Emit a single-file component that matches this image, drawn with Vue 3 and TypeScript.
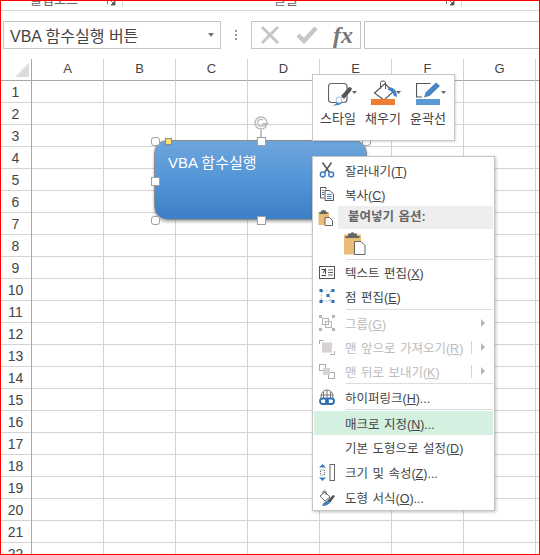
<script setup lang="ts">
const cols = ["A", "B", "C", "D", "E", "F", "G"];
const rows = Array.from({ length: 22 }, (_, i) => i + 1);
const cells = Array.from({ length: 22 * 8 }, (_, i) => i);

const handles = ["tl", "tm", "tr", "ml", "bl", "bm", "br"];

type Item = {
  label: string;
  key?: string;
  tail?: string;
  icon?: string;
  off?: boolean;
  arrow?: boolean;
  pipe?: boolean;
  sepAfter?: boolean;
  hot?: boolean;
  tall?: boolean;
};

const topItems: Item[] = [
  { label: "잘라내기", key: "T", icon: "cut" },
  { label: "복사", key: "C", icon: "copy" },
];
const lowItems: Item[] = [
  { label: "텍스트 편집", key: "X", icon: "text" },
  { label: "점 편집", key: "E", icon: "points", sepAfter: true },
  { label: "그룹", key: "G", icon: "group", off: true, arrow: true },
  { label: "맨 앞으로 가져오기", key: "R", icon: "front", off: true, arrow: true, pipe: true },
  { label: "맨 뒤로 보내기", key: "K", icon: "back", off: true, arrow: true, pipe: true, sepAfter: true },
  { label: "하이퍼링크", key: "H", tail: "...", icon: "link", sepAfter: true },
  { label: "매크로 지정", key: "N", tail: "...", hot: true },
  { label: "기본 도형으로 설정", key: "D", tall: true },
  { label: "크기 및 속성", key: "Z", tail: "...", icon: "size", tall: true },
  { label: "도형 서식", key: "O", tail: "...", icon: "format", tall: true },
];
</script>

<template>
  <div class="page">
    <div class="ribbon">
      <div class="group g1">
        <span class="group-name">클립보드</span>
        <svg class="launcher" width="9" height="9" viewBox="0 0 9 9"><path d="M0.5 0.5H7M0.5 0.5V7" fill="none" stroke="#777" /><path d="M3 3L7 7M8 4V8H4z" fill="#555" stroke="#555" stroke-width="0.8" /></svg>
      </div>
      <div class="group g2">
        <span class="group-name">글꼴</span>
        <svg class="launcher" width="9" height="9" viewBox="0 0 9 9"><path d="M0.5 0.5H7M0.5 0.5V7" fill="none" stroke="#777" /><path d="M3 3L7 7M8 4V8H4z" fill="#555" stroke="#555" stroke-width="0.8" /></svg>
      </div>
    </div>

    <div class="formula">
      <div class="namebox">
        <span>VBA 함수실행 버튼</span>
        <i class="caret"></i>
      </div>
      <div class="dots"><b></b><b></b><b></b></div>
      <div class="fx-buttons">
        <svg width="22" height="20" viewBox="0 0 22 20"><path d="M3 2L19 18M19 2L3 18" stroke="#c6c6c6" stroke-width="3" fill="none" /></svg>
        <svg width="22" height="20" viewBox="0 0 22 20"><path d="M2 10L8 16L20 3" stroke="#c6c6c6" stroke-width="4.500" fill="none" /></svg>
        <span class="fx">fx</span>
      </div>
      <div class="input"></div>
    </div>

    <div class="sheet">
      <div class="corner"><i></i></div>
      <div v-for="c in cols" :key="c" class="col-head">{{ c }}</div>
      <div class="col-rest"></div>
      <div class="row-heads">
        <div v-for="r in rows" :key="r" class="row-head">{{ r }}</div>
      </div>
      <div class="cells">
        <div v-for="c in cells" :key="c" class="cell"></div>
      </div>
    </div>

    <!-- selected shape -->
    <div class="shape">
      <span>VBA 함수실행</span>
    </div>
    <svg class="rotate" width="20" height="26" viewBox="0 0 20 26">
      <path d="M10 17V26" stroke="#8a8a8a" fill="none" />
      <circle cx="10" cy="10" r="6" fill="none" stroke="#bbb" stroke-width="1.400" />
      <path d="M13.500 10a3.500 3.500 0 1 1 -1.500 -3" fill="none" stroke="#bbb" stroke-width="1.400" />
      <path d="M11 10L18 10L14.500 14z" fill="#bbb" />
    </svg>
    <i v-for="h in handles" :key="h" class="handle" :class="h"></i>
    <i class="adjust"></i>

    <!-- mini toolbar -->
    <div class="mini">
      <div class="mini-btn">
        <svg class="mini-icon style-icon" width="30" height="26" viewBox="0 0 30 26">
          <rect x="0.500" y="3.500" width="18.500" height="19" rx="3" fill="none" stroke="#666" stroke-width="1.200" />
          <path d="M4 25.500Q8 25 10.500 20L15 22Q12 26 4 25.500z" fill="#3f7fc0" />
          <circle cx="11" cy="20" r="3" fill="#fff" stroke="#9cc0e2" />
          <path d="M13 16L21 7L24 8L23 11L16 19z" fill="#555" />
          <path d="M24 11h5l-2.500 3z" fill="#666" />
        </svg>
        <span>스타일</span>
      </div>
      <div class="mini-btn">
        <svg class="mini-icon" width="30" height="26" viewBox="0 0 30 26">
          <path d="M3.500 13L14 3.500L22 12L13 20z" fill="#fff" stroke="#555" stroke-width="1.100" />
          <path d="M9.500 9V2.500Q9.500 1 12 1Q14.500 1 14.500 2.500V9" fill="none" stroke="#555" />
          <path d="M18 7Q26 8 26 17L23 16Q22 11 17 10z" fill="#3f7fc0" />
          <rect x="0" y="19" width="24" height="6" fill="#ed7d31" />
          <path d="M25 11h5l-2.500 3z" fill="#666" />
        </svg>
        <span>채우기</span>
      </div>
      <div class="mini-btn">
        <svg class="mini-icon" width="30" height="26" viewBox="0 0 30 26">
          <path d="M14.500 3.500H0.500V17H6" fill="none" stroke="#555" stroke-width="1.200" />
          <path d="M8 17.500L9.500 12.500L20 2.500L24 6L13.500 16z" fill="#4a86c5" />
          <rect x="0" y="19" width="24" height="6" fill="#5b9bd5" />
          <path d="M25 11h5l-2.500 3z" fill="#666" />
        </svg>
        <span>윤곽선</span>
      </div>
    </div>

    <!-- context menu -->
    <div class="menu">
      <div v-for="it in topItems" :key="it.label" class="item">
        <div class="ico">
          <svg v-if="it.icon === 'cut'" width="16" height="16" viewBox="0 0 16 16">
            <path d="M3.500 0.500L10.500 10.500M12.500 0.500L5.500 10.500" stroke="#555" stroke-width="1.500" fill="none" />
            <circle cx="3.800" cy="12.500" r="2.400" fill="none" stroke="#3f7fc0" stroke-width="1.500" />
            <circle cx="12.200" cy="12.500" r="2.400" fill="none" stroke="#3f7fc0" stroke-width="1.500" />
          </svg>
          <svg v-else width="16" height="16" viewBox="0 0 16 16">
            <path d="M1.500 1.500H7V3.500M1.500 1.500V12H5" fill="none" stroke="#555" />
            <path d="M3 4.500H5M3 6.500H5M3 8.500H5" stroke="#3f7fc0" />
            <path d="M6 4.500H10.500L14.500 8V14.500H6z" fill="#fff" stroke="#555" />
            <path d="M8 8.500H12.500M8 10.500H12.500M8 12.500H12.500" stroke="#3f7fc0" />
          </svg>
        </div>
        <span class="label">{{ it.label }}(<u>{{ it.key }}</u>)</span>
      </div>

      <div class="paste-head">
        <div class="ico">
          <svg width="16" height="17" viewBox="0 0 16 17">
            <rect x="0.500" y="3" width="10.500" height="13" fill="#e9bd77" />
            <path d="M3 3V1.500H4.500Q5.500 0 6.500 1.500H8V3H9.500V5H1.500V3z" fill="#666" />
            <path d="M7 8.500H11.500L14.500 11.500V16.500H7z" fill="#fff" stroke="#666" />
          </svg>
        </div>
        <span class="paste-title">붙여넣기 옵션:</span>
      </div>
      <div class="paste-row">
        <svg width="22" height="24" viewBox="0 0 22 24">
          <rect x="0" y="3.500" width="17" height="20" fill="#e9bd77" />
          <path d="M4 5V2.500H6.500Q8.500 0 10.500 2.500H13V5H15.500V7H1.500V5z" fill="#666" />
          <path d="M10.500 10.500H17L21 14.500V23.500H10.500z" fill="#fff" stroke="#666" />
        </svg>
      </div>
      <div class="sep"></div>

      <template v-for="it in lowItems" :key="it.label">
        <div class="item" :class="{ off: it.off, hot: it.hot, tall: it.tall }">
          <div class="ico">
            <svg v-if="it.icon === 'text'" width="16" height="13" viewBox="0 0 16 13">
              <rect x="0.500" y="0.500" width="15" height="12" fill="#fff" stroke="#555" />
              <path d="M2.500 3.500H6L4 7M6.500 2.500V8M2.500 9.500H7" stroke="#444" fill="none" />
              <path d="M9 4H14M9 6.500H14M9 9H14" stroke="#666" />
            </svg>
            <svg v-else-if="it.icon === 'points'" width="16" height="14" viewBox="0 0 16 14">
              <path d="M3 2L13 2M3 12L13 12M3 2L2 12M13 2L9 6L13 12" stroke="#8fb5da" stroke-dasharray="2 1.500" fill="none" />
              <path d="M0.500 0h3v3h-3zM12.500 0h3v3h-3zM0.500 11h3v3h-3zM12.500 11h3v3h-3zM7.500 5h3v3h-3z" fill="#2f6fb0" />
            </svg>
            <svg v-else-if="it.icon === 'group'" width="16" height="16" viewBox="0 0 16 16">
              <path d="M0 0h3v3h-3zM13 0h3v3h-3zM0 13h3v3h-3zM13 13h3v3h-3z" fill="#b5b5b5" />
              <rect x="3.500" y="3.500" width="6" height="6" fill="none" stroke="#b5b5b5" />
              <rect x="6.500" y="6.500" width="6" height="6" fill="none" stroke="#b5b5b5" />
            </svg>
            <svg v-else-if="it.icon === 'front'" width="16" height="15" viewBox="0 0 16 15">
              <path d="M0.500 4V0.500H4.500M15.500 11V14.500H11" fill="none" stroke="#aaa" />
              <rect x="3" y="2.500" width="10" height="10" fill="#d6d2d6" />
            </svg>
            <svg v-else-if="it.icon === 'back'" width="16" height="15" viewBox="0 0 16 15">
              <rect x="0.500" y="0.500" width="6" height="6" fill="#fff" stroke="#aaa" />
              <rect x="9.500" y="8.500" width="6" height="6" fill="#fff" stroke="#aaa" />
              <rect x="4" y="4" width="7" height="7" fill="#d6d2d6" />
            </svg>
            <svg v-else-if="it.icon === 'link'" width="16" height="16" viewBox="0 0 16 16">
              <path d="M2 9V7A6 6 0 0 1 14 7V9" fill="#fff" stroke="#777" />
              <path d="M2 6H14M8 1V9M4.500 2.500V9M11.500 2.500V9" stroke="#777" fill="none" />
              <rect x="1" y="9.500" width="8" height="5.500" rx="2.700" fill="none" stroke="#2f6fb0" stroke-width="1.900" />
              <rect x="7" y="9.500" width="8" height="5.500" rx="2.700" fill="none" stroke="#2f6fb0" stroke-width="1.900" />
            </svg>
            <svg v-else-if="it.icon === 'size'" width="16" height="17" viewBox="0 0 16 17">
              <path d="M3.500 0L7 3.500H0zM3.500 17L7 13.500H0z" fill="#3f7fc0" />
              <rect x="1.500" y="6" width="4" height="5" fill="none" stroke="#666" stroke-dasharray="1 1" />
              <rect x="11" y="0.500" width="4.500" height="16" fill="#fff" stroke="#666" />
            </svg>
            <svg v-else-if="it.icon === 'format'" width="16" height="16" viewBox="0 0 16 16">
              <path d="M1 6L6 2L11 7L6 11z" fill="#fff" stroke="#666" />
              <path d="M4 4V1.500Q5.500 0 7 1.500V5" stroke="#666" fill="none" />
              <path d="M8 11L14 5L16 6L11 13z" fill="#555" />
              <path d="M3 16Q5 11 9 11L11 13Q8 16 3 16z" fill="#3f7fc0" />
            </svg>
          </div>
          <span class="label">{{ it.label }}(<u>{{ it.key }}</u>){{ it.tail }}</span>
          <i v-if="it.pipe" class="pipe"></i>
          <i v-if="it.arrow" class="arrow"></i>
        </div>
        <div v-if="it.sepAfter" class="sep" :class="{ gap: it.icon === 'points' }"></div>
      </template>
    </div>
  </div>
</template>

<style>
html,
body {
  margin: 0;
  background: #fff;
}
</style>

<style scoped>
.page {
  position: relative;
  width: 540px;
  height: 555px;
  box-sizing: border-box;
  overflow: hidden;
  border: 1px solid #f00;
  font-family: "Liberation Sans", "Noto Sans CJK KR", sans-serif;
  color: #444;
  background: #fff;
}

.ribbon {
  display: flex;
  height: 9px;
  border-bottom: 1px solid #d4d4d4;
  overflow: hidden;
}

.group {
  display: flex;
  flex: none;
  position: relative;
  border-right: 1px solid #d4d4d4;
  height: 5px;
  font-size: 13px;
  color: #666;
}

.g1 {
  width: 121px;
}

.g2 {
  width: 338px;
}

.group-name {
  position: relative;
  top: -9px;
  line-height: 16px;
  white-space: nowrap;
}

.g1 .group-name {
  margin-left: 29px;
}

.g2 .group-name {
  margin-left: 151px;
}

.launcher {
  position: absolute;
  right: 6px;
  top: -4px;
}

.formula {
  display: flex;
  align-items: flex-start;
  height: 48px;
  box-sizing: border-box;
  padding: 10px 0 0 2px;
}

.namebox {
  display: flex;
  align-items: center;
  justify-content: space-between;
  width: 218px;
  height: 28px;
  box-sizing: border-box;
  border: 1px solid #c6c6c6;
  padding: 0 6px;
  font-size: 16px;
  color: #444;
}

.caret {
  border-top: 4px solid #777;
  border-left: 3.5px solid transparent;
  border-right: 3.5px solid transparent;
}

.dots {
  display: flex;
  flex-direction: column;
  gap: 2px;
  width: 30px;
  height: 28px;
  justify-content: center;
  align-items: center;
}

.dots b {
  width: 2px;
  height: 2px;
  background: #999;
}

.fx-buttons {
  display: flex;
  align-items: center;
  width: 110px;
  height: 28px;
  box-sizing: border-box;
  border: 1px solid #c6c6c6;
  padding-left: 7px;
  gap: 15px;
}

.fx {
  font-family: "Liberation Serif", serif;
  font-style: italic;
  font-weight: bold;
  font-size: 24px;
  line-height: 26px;
  color: #777;
}

.input {
  flex: 1;
  height: 28px;
  box-sizing: border-box;
  margin-left: 3px;
  border: 1px solid #c6c6c6;
  border-right: 0;
}

.sheet {
  display: grid;
  grid-template-columns: 31px repeat(7, 72px) 1fr;
  grid-template-rows: 22px auto;
}

.corner {
  position: relative;
  border-right: 1px solid #a8a8a8;
  border-bottom: 1px solid #a8a8a8;
  box-sizing: border-box;
}

.corner i {
  position: absolute;
  right: 2px;
  bottom: 3px;
  border-style: solid;
  border-width: 0 0 14px 14px;
  border-color: transparent transparent #dcdcdc transparent;
}

.col-head {
  border-right: 1px solid #d4d4d4;
  border-bottom: 1px solid #a8a8a8;
  font-size: 13px;
  line-height: 20px;
  text-align: center;
  box-sizing: border-box;
}

.col-rest {
  border-bottom: 1px solid #a8a8a8;
}

.row-heads {
  border-right: 1px solid #a8a8a8;
  box-sizing: border-box;
}

.row-head {
  height: 22px;
  box-sizing: border-box;
  border-bottom: 1px solid #d4d4d4;
  font-size: 14px;
  line-height: 23px;
  text-align: center;
  padding-right: 1px;
}

.cells {
  grid-column: 2 / -1;
  display: grid;
  grid-template-columns: repeat(7, 72px) 1fr;
  grid-auto-rows: 22px;
}

.cell {
  box-sizing: border-box;
  border-right: 1px solid #d4d4d4;
  border-bottom: 1px solid #d4d4d4;
}

.cell:nth-child(8n) {
  border-right: 0;
}

.shape {
  position: absolute;
  left: 153px;
  top: 139px;
  width: 213px;
  height: 80px;
  box-sizing: border-box;
  border: 1px solid #8d8d8d;
  border-radius: 13px;
  background: linear-gradient(#6fa5db, #5295d8 50%, #3d7fc4);
  box-shadow: 0 2px 3px rgba(0, 0, 0, 0.3);
  color: #fff;
  font-size: 15px;
  line-height: 20px;
  padding: 12px 13px;
}

.rotate {
  position: absolute;
  left: 250px;
  top: 112px;
}

.handle {
  position: absolute;
  width: 7px;
  height: 7px;
  border: 1px solid #a0a0a0;
  background: #fff;
}

.handle.tl {
  left: 150px;
  top: 136px;
  border-radius: 3px;
}

.handle.tm {
  left: 256px;
  top: 136px;
}

.handle.tr {
  left: 361px;
  top: 136px;
  border-radius: 3px;
}

.handle.ml {
  left: 150px;
  top: 176px;
}

.handle.bl {
  left: 150px;
  top: 215px;
  border-radius: 3px;
}

.handle.bm {
  left: 256px;
  top: 215px;
}

.handle.br {
  left: 361px;
  top: 215px;
  border-radius: 3px;
}

.adjust {
  position: absolute;
  left: 164px;
  top: 137px;
  width: 5px;
  height: 5px;
  border: 1px solid #8a8a8a;
  background: #ffdf70;
}

.mini {
  position: absolute;
  left: 311px;
  top: 73px;
  width: 143px;
  height: 67px;
  box-sizing: border-box;
  display: flex;
  gap: 7px;
  padding: 5px 0 0 6px;
  background: #fff;
  border: 1px solid #c6c6c6;
  box-shadow: 1px 1px 2px rgba(0, 0, 0, 0.15);
}

.mini-btn {
  display: flex;
  flex-direction: column;
  align-items: center;
  width: 38px;
  gap: 5px;
  font-size: 13px;
  line-height: 15px;
  color: #444;
  white-space: nowrap;
}

.mini-icon {
  flex: none;
  margin-left: 6px;
}

.mini-icon.style-icon {
  margin-left: 10px;
}

.menu {
  position: absolute;
  left: 311px;
  top: 155px;
  width: 183px;
  height: 355px;
  box-sizing: border-box;
  padding-top: 1px;
  background: #fff;
  border: 1px solid #c6c6c6;
  box-shadow: 1px 1px 3px rgba(0, 0, 0, 0.25);
  font-size: 12.5px;
  word-spacing: 1px;
  color: #444;
}

.item {
  display: flex;
  align-items: center;
  height: 24px;
  padding-left: 1px;
}

.item.tall {
  height: 25px;
}

.item.off {
  color: #bbb;
}

.item.hot {
  background: #d3f0e0;
  margin: 0 1px;
  padding-left: 0;
}

.ico {
  display: flex;
  align-items: center;
  justify-content: center;
  width: 25px;
  margin-right: 6px;
  flex: none;
}

.label {
  white-space: nowrap;
  flex: 1;
}

.pipe {
  width: 1px;
  height: 13px;
  background: #d4d4d4;
  margin-right: 9px;
}

.arrow {
  border-left: 4px solid #b5b5b5;
  border-top: 4px solid transparent;
  border-bottom: 4px solid transparent;
  margin-right: 9px;
}

.paste-head {
  display: flex;
  align-items: center;
  height: 23px;
}

.paste-head .ico {
  width: 24px;
  margin: 0 0 0 1px;
}

.paste-title {
  flex: 1;
  align-self: stretch;
  line-height: 23px;
  background: #eeeeee;
  padding-left: 10px;
  font-weight: bold;
  color: #666;
  margin-right: 1px;
}

.paste-row {
  height: 29px;
  padding: 2px 0 0 31px;
  box-sizing: border-box;
}

.sep {
  height: 1px;
  margin: 0 1px 1px 33px;
  background: #dcdcdc;
}

.paste-row + .sep {
  margin: 1px 1px 0 33px;
}

.sep.gap {
  margin-top: 1px;
}
</style>
